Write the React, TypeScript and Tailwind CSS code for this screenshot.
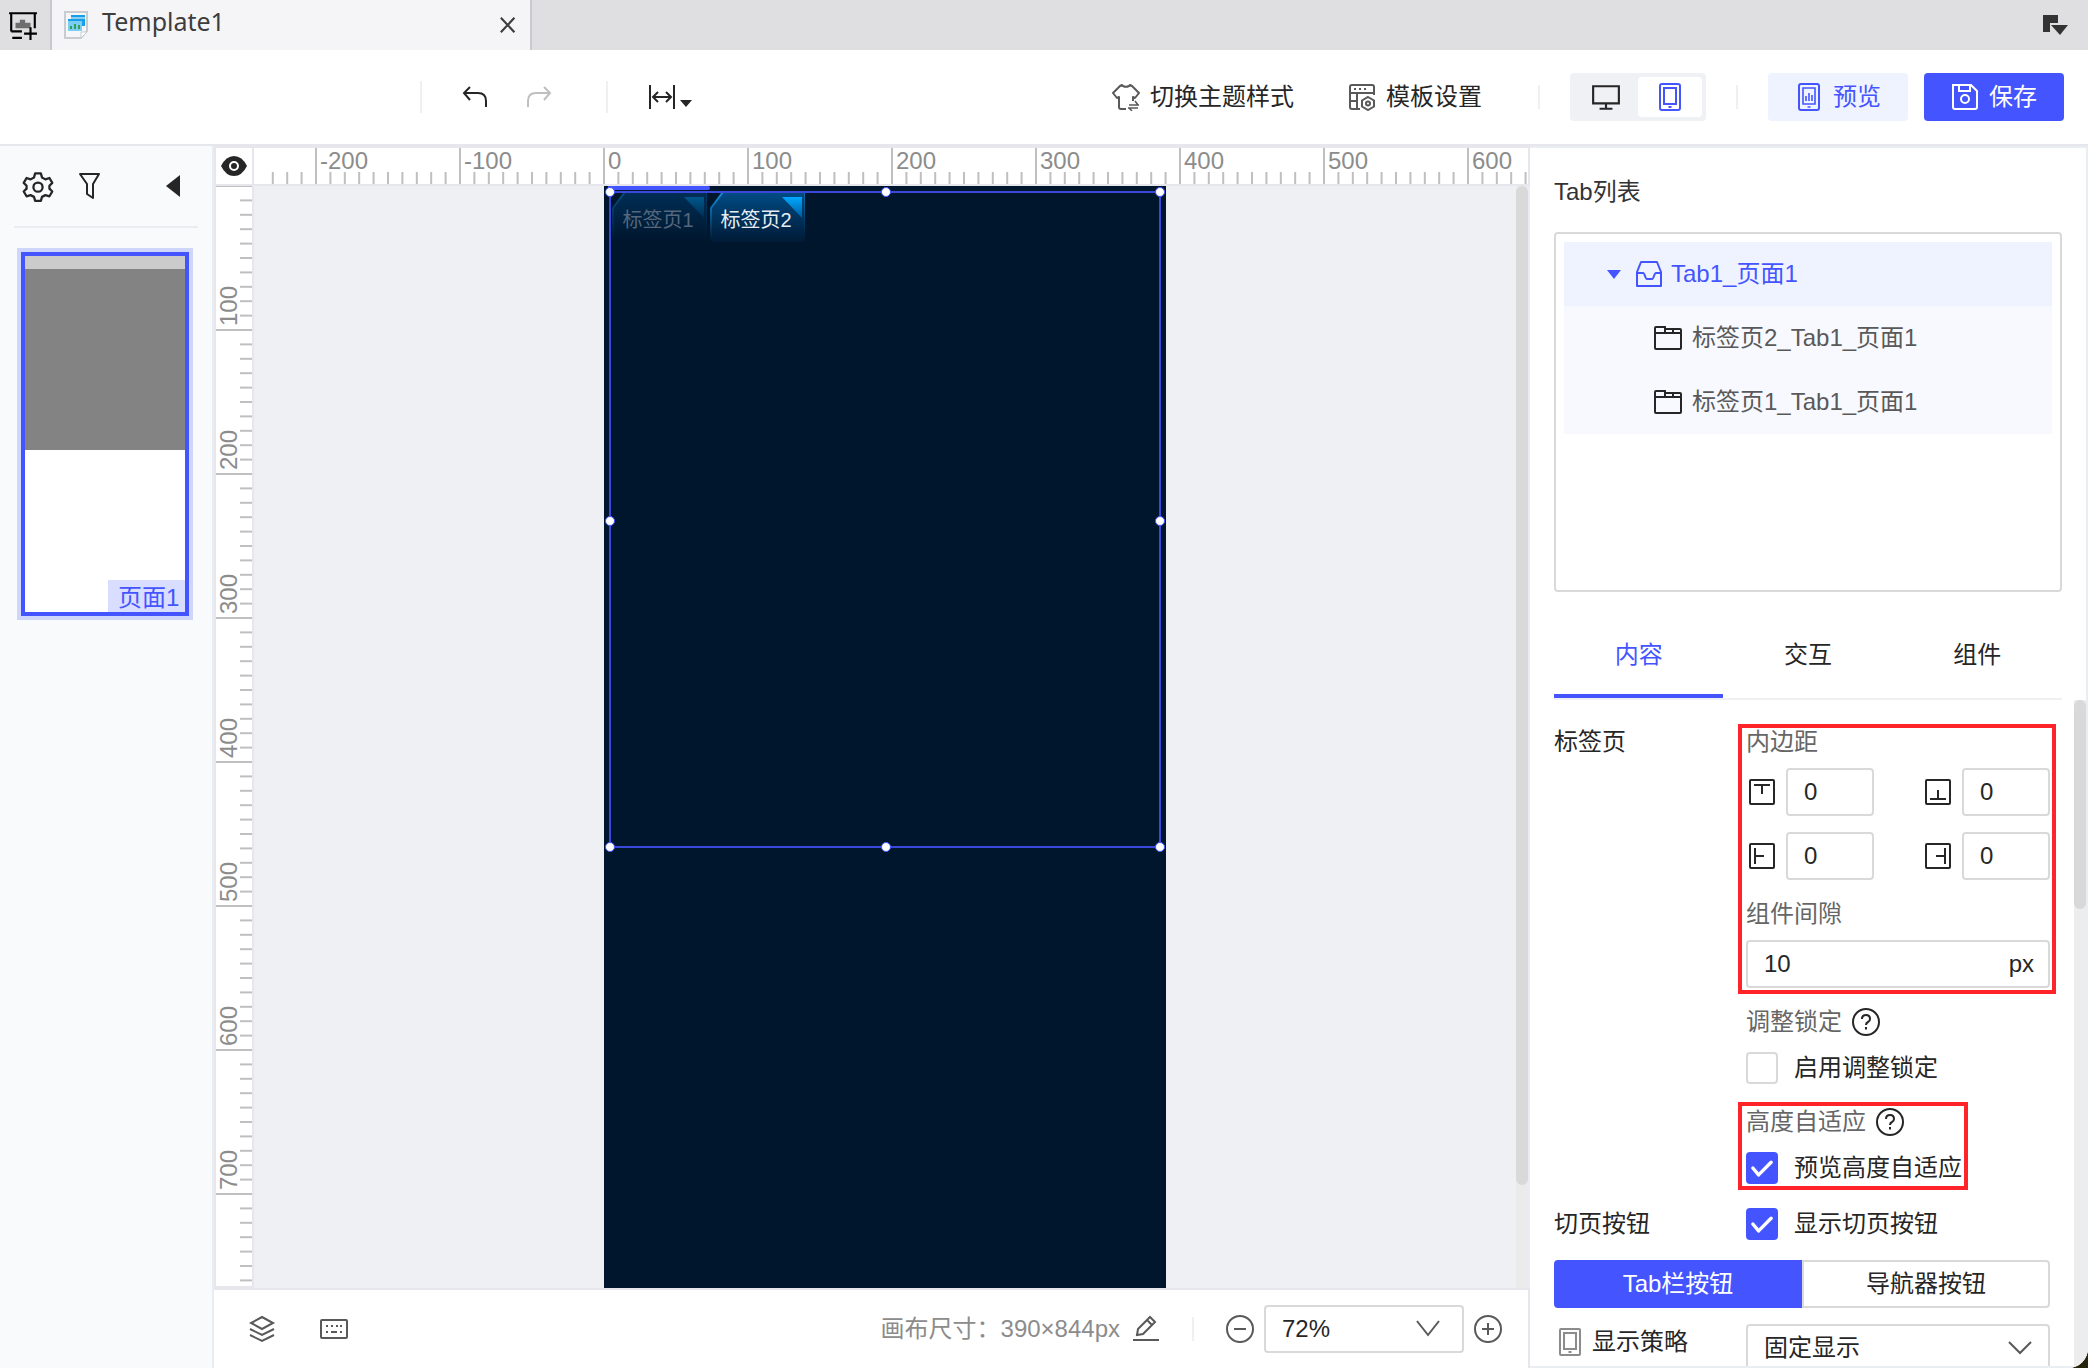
import { useState } from "react";
import type { ReactNode } from "react";
import clsx from "clsx";

const SCALE = 1.44;

const treeItems = ["标签页2_Tab1_页面1", "标签页1_Tab1_页面1"];
const panelTabs = ["内容", "交互", "组件"];

type IconProps = {
  className?: string;
  size?: number;
  width?: number;
  children: ReactNode;
};

function Icon({ className, size = 28, width = 2, children }: IconProps) {
  return (
    <svg
      width={size}
      height={size}
      viewBox="0 0 28 28"
      fill="none"
      stroke="currentColor"
      strokeWidth={width}
      className={clsx("shrink-0", className)}
      aria-hidden="true"
    >
      {children}
    </svg>
  );
}

function Divider({ className }: { className?: string }) {
  return <div className={clsx("w-0.5 shrink-0 bg-[#f0f0f2]", className)} />;
}

function TabStrip() {
  return (
    <div className="flex h-[50px] shrink-0 bg-[#dfdfe1] text-[#3d3d3d]">
      <button aria-label="新建模板" className="flex w-[52px] items-center justify-center border-r-2 border-[#c9c9ce] pr-1">
        <Icon className="text-black" size={30}>
          <path d="M3 20V3h22v14M1 3h26M3 20h10" />
          <path d="M7 17V12h4V9h5v3h5v5z" fill="#6e6e6e" stroke="none" />
          <path d="M4 26h9M15 22h12M21 16v12" />
        </Icon>
      </button>
      <div className="flex w-[480px] items-center border-r-2 border-[#c9c9ce] bg-[#f5f5f8] pr-3 pl-3">
        <svg width="24" height="28" viewBox="0 0 24 28" aria-hidden="true">
          <path d="M1 1h22v19l-6 7H1z" fill="#f4f6f7" stroke="#c9cccf" strokeWidth="2" />
          <path d="M17 27v-6h6z" fill="#fff" stroke="#c9cccf" />
          <path d="M7 4h14v11H7z" fill="#169fe6" />
          <path d="M7 7h14" stroke="#fff" />
          <path d="M4 8h14v12H4z" fill="#7ccdf3" />
          <path d="M4 9h14" stroke="#169fe6" strokeWidth="2" />
          <path d="M7 18v-3M11 18v-5M15 18v-4" stroke="#2ea05a" strokeWidth="2" />
        </svg>
        <span className="ml-3.5 flex-1 pb-2 font-['Noto_Sans',sans-serif] text-[25px] leading-9">Template1</span>
        <button aria-label="关闭">
          <Icon size={20} width={3}>
            <path d="M4 4l19 20M23 4L4 24" />
          </Icon>
        </button>
      </div>
      <button aria-label="窗口列表" className="ml-auto pr-5">
        <svg width="26" height="22" viewBox="0 0 26 22" fill="#333" aria-hidden="true">
          <path d="M1 1h15v8H8v9H1z" />
          <path d="M9 11h17l-8 10z" />
        </svg>
      </button>
    </div>
  );
}

function Toolbar() {
  const [device, setDevice] = useState("mobile");

  return (
    <header className="flex h-24 shrink-0 items-center border-b-2 border-[#e6e6ec] bg-white pr-6 text-2xl leading-9 text-[#262626]">
      <Divider className="ml-[420px] h-8" />
      <button aria-label="撤销" className="ml-[39px]">
        <Icon>
          <path d="M9 4L3 10l6 7M3 10h14q8 0 8 8v6" />
        </Icon>
      </button>
      <button aria-label="重做" className="ml-9 text-[#bfbfbf]">
        <Icon>
          <path d="M19 4l6 6-6 7M25 10H11q-8 0-8 8v6" />
        </Icon>
      </button>
      <Divider className="ml-[53px] h-8" />
      <button aria-label="适应宽度" className="ml-10 flex items-center gap-1">
        <Icon>
          <path d="M2 2v24M26 2v24M6 14h16M10 9l-5 5 5 5M18 9l5 5-5 5" />
        </Icon>
        <svg width="12" height="8" viewBox="0 0 12 8" className="mt-3" aria-hidden="true">
          <path d="M0 1h12L6 8z" fill="currentColor" />
        </svg>
      </button>

      <button className="ml-auto flex items-center gap-2.5">
        <Icon className="text-[#595959]">
          <path d="M14 26H9q-2 0-2-2V14l-2 1-4-5 7-7 2-1 1 1q3 1.500 6 0l1-1 2 1 7 7-4 5-2-1v4" strokeLinejoin="round" />
          <path d="M17 22h10M23 18l3 4M26 25H16M20 28l-3-3" strokeWidth="1.500" />
        </Icon>
        切换主题样式
      </button>
      <button className="ml-[54px] flex items-center gap-2.5">
        <Icon className="text-[#595959]">
          <path d="M12 26H4q-2 0-2-2V4q0-2 2-2h20q2 0 2 2v8M2 10h24M9 10v16M2 18h8" />
          <path d="M6 6h2M11 6h2M16 6h2" />
          <path d="M20 14l6 3.500v6L20 27l-6-3.500v-6z" />
          <circle cx="20" cy="20.500" r="2" />
        </Icon>
        模板设置
      </button>
      <Divider className="ml-14 h-6" />
      <div className="ml-[30px] flex h-12 w-[136px] shrink-0 rounded bg-[#f0f1f5] p-1">
        <button
          aria-label="桌面端"
          onClick={() => setDevice("desktop")}
          className={clsx("flex flex-1 items-center justify-center rounded", device === "desktop" ? "bg-white text-[#4455ff]" : "text-[#262626]")}
        >
          <Icon size={30}>
            <path d="M2 4h24v16H2zM14 20v5M8 25h12" />
          </Icon>
        </button>
        <button
          aria-label="移动端"
          onClick={() => setDevice("mobile")}
          className={clsx("flex flex-1 items-center justify-center rounded", device === "mobile" ? "bg-white text-[#4455ff]" : "text-[#262626]")}
        >
          <Icon>
            <rect x="4" y="1" width="20" height="26" rx="2" />
            <path d="M8 5h12v16H8zM12.500 24h3" />
          </Icon>
        </button>
      </div>
      <Divider className="ml-[30px] h-6" />
      <button className="ml-[30px] flex h-12 w-[140px] shrink-0 items-center justify-center gap-2.5 rounded bg-[#eff3ff] text-[#4455ff]">
        <Icon>
          <rect x="4" y="1" width="20" height="26" rx="2" />
          <path d="M8 5h12v16H8zM12.500 24h3M11 18v-5M14 18v-8M17 18v-6" strokeWidth="1.600" />
        </Icon>
        预览
      </button>
      <button className="ml-4 flex h-12 w-[140px] shrink-0 items-center justify-center gap-2.5 rounded bg-[#4455ff] text-white">
        <Icon>
          <path d="M2 2h18l6 6v16q0 2-2 2H4q-2 0-2-2zM8 2v6h11V2" />
          <circle cx="14" cy="16" r="4" />
        </Icon>
        保存
      </button>
    </header>
  );
}

function PageSidebar() {
  return (
    <aside className="w-[214px] shrink-0 border-r-2 border-[#e9edf3] bg-[#f8fafc]">
      <div className="mx-3.5 flex h-[82px] items-center border-b-2 border-[#ebedf0] px-2 pb-1 text-[#262626]">
        <button aria-label="设置" className="pt-1">
          <Icon size={32}>
            <path d="M11.500 3h5l1 3.500 3 1.700 3.500-1.200 2.500 4.300-2.500 2.500v2.500l2.500 2.500-2.500 4.200-3.500-1-3 1.500-1 3.500h-5l-1-3.500-3-1.500-3.500 1-2.500-4.200L4 16.300v-2.500l-2.500-2.500L4 7l3.500 1.200 3-1.700z" strokeLinejoin="round" />
            <circle cx="14" cy="15" r="4" />
          </Icon>
        </button>
        <button aria-label="筛选" className="ml-[22px] pt-1">
          <Icon>
            <path d="M4 2h19l-6 10v14l-6-4V12z" strokeLinejoin="round" />
          </Icon>
        </button>
        <button aria-label="收起" className="ml-auto pt-1 pr-2.5">
          <svg width="14" height="24" viewBox="0 0 14 24" fill="currentColor" aria-hidden="true">
            <path d="M14 1v22L0 12z" />
          </svg>
        </button>
      </div>
      <button className="mx-[17px] mt-5 block border-4 border-[#cfd6fb] text-left">
        <div className="flex h-[364px] w-[168px] flex-col border-4 border-[#4455ff] bg-white">
          <div className="h-[13px] bg-[#cbcbcb]" />
          <div className="h-[181px] bg-[#838383]" />
          <div className="mt-auto ml-auto h-8 w-[77px] bg-[#d9ddff] pl-2.5 text-2xl leading-9 text-[#4455ff]">页面1</div>
        </div>
      </button>
    </aside>
  );
}

function HorizontalRuler() {
  const ticks = Array.from({ length: 93 }, (_, i) => (i - 23) * 10);
  return (
    <svg className="h-9 min-w-0 flex-1 bg-white" aria-hidden="true">
      {ticks.map((t) => {
        const x = 350 + t * SCALE;
        const major = t % 100 === 0;
        return (
          <g key={t}>
            <line x1={x} x2={x} y1={major ? 0 : 24} y2="36" stroke="#bfbfbf" strokeWidth="2" />
            {major && (
              <text x={x + 4} y="21" fontSize="24" fill="#8c8c8c">
                {t}
              </text>
            )}
          </g>
        );
      })}
    </svg>
  );
}

function VerticalRuler() {
  const ticks = Array.from({ length: 85 }, (_, i) => i * 10);
  return (
    <svg className="h-full w-9 bg-white" aria-hidden="true">
      {ticks.map((t) => {
        const y = t * SCALE;
        const major = t % 100 === 0;
        return (
          <g key={t}>
            <line x1={major ? 0 : 24} x2="36" y1={y} y2={y} stroke="#bfbfbf" strokeWidth="2" />
            {major && t > 0 && (
              <text transform={`translate(21 ${y - 4}) rotate(-90)`} fontSize="24" fill="#8c8c8c">
                {t}
              </text>
            )}
          </g>
        );
      })}
    </svg>
  );
}

function PageTab({ label, active, onClick }: { label: string; active: boolean; onClick: () => void }) {
  const id = active ? "tab-on" : "tab-off";
  return (
    <button onClick={onClick} className={clsx("relative h-[50px] w-24 pr-1 text-xl leading-[56px]", active ? "text-[#e8edf2]" : "text-[#56677c]")}>
      <svg className="absolute inset-0" width="96" height="50" viewBox="0 0 96 50" aria-hidden="true">
        <defs>
          <linearGradient id={id} x1="0" y1="0" x2="0" y2="1">
            <stop offset="0" stopColor={active ? "#004c86" : "#002e56"} />
            <stop offset="1" stopColor={active ? "#001a36" : "#00162d"} />
          </linearGradient>
          <linearGradient id={`${id}-corner`} x1="0" y1="0" x2="0" y2="1">
            <stop offset="0" stopColor={active ? "#00a8ff" : "#00588c"} />
            <stop offset="1" stopColor={active ? "#00599b" : "#002b50"} />
          </linearGradient>
          <linearGradient id={`${id}-edge`} x1="0" y1="0" x2="0" y2="50" gradientUnits="userSpaceOnUse">
            <stop offset="0" stopColor={active ? "#1290e0" : "#064d80"} />
            <stop offset="1" stopColor="#00162d" />
          </linearGradient>
        </defs>
        <path d="M1 50V16L13 0h82v50z" fill={`url(#${id})`} />
        <path d="M1 50V16L13 0" fill="none" stroke={`url(#${id}-edge)`} strokeWidth="2" />
        <path d="M94 0h1v50h-1z" fill={`url(#${id}-edge)`} opacity="0.5" />
        <path d="M72 5h20v21z" fill={`url(#${id}-corner)`} />
      </svg>
      <span className="relative">{label}</span>
    </button>
  );
}

function Selection() {
  const handles = [
    "-left-1.5 -top-1.5",
    "left-1/2 -ml-1 -top-1.5",
    "-right-1.5 -top-1.5",
    "-left-1.5 top-1/2 -mt-1",
    "-right-1.5 top-1/2 -mt-1",
    "-left-1.5 -bottom-1.5",
    "left-1/2 -ml-1 -bottom-1.5",
    "-right-1.5 -bottom-1.5",
  ];
  return (
    <div className="pointer-events-none absolute top-[5px] left-[5px] h-[657px] w-[552px] border-2 border-[#3a49dc]">
      {handles.map((h) => (
        <span key={h} className={clsx("absolute h-2.5 w-2.5 rounded-full border border-[#4455ff] bg-white", h)} />
      ))}
    </div>
  );
}

function Workspace() {
  const [tab, setTab] = useState(1);

  return (
    <main className="flex min-w-0 flex-1 flex-col">
      <div className="flex h-10 shrink-0 border-y-2 border-[#e6e6ec]">
        <button aria-label="显示标尺" className="flex w-10 shrink-0 items-center justify-center border-x-2 border-[#e6e6ec] bg-white text-[#262626]">
          <svg width="26" height="20" viewBox="0 0 26 20" aria-hidden="true">
            <path d="M0 10Q5 0 13 0t13 10q-5 10-13 10T0 10z" fill="currentColor" />
            <circle cx="13" cy="10" r="4" fill="none" stroke="#fff" strokeWidth="2" />
          </svg>
        </button>
        <HorizontalRuler />
        <div className="w-0.5 bg-[#e6e6ec]" />
      </div>
      <div className="flex min-h-0 flex-1">
        <div className="w-10 shrink-0 border-x-2 border-b-2 border-[#e6e6ec]">
          <VerticalRuler />
        </div>
        <div className="min-w-0 flex-1 overflow-hidden bg-[#eff0f4]">
          <div className="relative ml-[350px] h-full w-[562px] bg-[#00162d] px-2 pt-1.5">
            <div className="absolute top-0 left-1 h-1 w-[102px] rounded-r-sm bg-[#4455ff]" />
            <div className="flex gap-0.5">
              <PageTab label="标签页1" active={tab === 0} onClick={() => setTab(0)} />
              <PageTab label="标签页2" active={tab === 1} onClick={() => setTab(1)} />
            </div>
            <Selection />
          </div>
        </div>
        <div className="w-3 shrink-0 bg-[#ebebeb]">
          <div className="h-[999px] max-h-full rounded-full bg-[#d9d9d9]" />
        </div>
        <div className="w-0.5 shrink-0 bg-[#e9edf3]" />
      </div>
      <footer className="flex h-20 shrink-0 items-center border-t-2 border-r-2 border-[#e6e6ec] bg-white pr-[26px] pl-[34px] text-2xl leading-9 text-[#595959]">
        <button aria-label="图层">
          <Icon>
            <path d="M14 2l11 6-11 6L3 8zM2 14l12 6 12-6M2 20l12 6 12-6" />
          </Icon>
        </button>
        <button aria-label="键盘" className="ml-11">
          <Icon>
            <rect x="1" y="5" width="26" height="18" rx="1" />
            <path d="M6 11h2M11 11h2M16 11h2M20 11h2M6 17h2M11 17h6M20 17h2" />
          </Icon>
        </button>
        <span className="ml-auto text-[#8c8c8c]">画布尺寸：390×844px</span>
        <button aria-label="编辑画布尺寸" className="ml-3">
          <Icon>
            <path d="M1 25h26M5 20l1-6L18 2l5 5-12 12zM15 5l5 5" />
          </Icon>
        </button>
        <Divider className="ml-8 h-6" />
        <button aria-label="缩小" className="ml-8">
          <Icon>
            <circle cx="14" cy="14" r="13" />
            <path d="M8 14h12" />
          </Icon>
        </button>
        <div className="relative ml-2.5">
          <select aria-label="缩放比例" className="h-12 w-[200px] appearance-none rounded border-2 border-[#d9d9d9] bg-white pl-4 text-[#262626]">
            <option>72%</option>
            <option>100%</option>
          </select>
          <Icon className="pointer-events-none absolute top-2.5 right-[22px]">
            <path d="M3 6l11 14L25 6" />
          </Icon>
        </div>
        <button aria-label="放大" className="ml-2.5">
          <Icon>
            <circle cx="14" cy="14" r="13" />
            <path d="M8 14h12M14 8v12" />
          </Icon>
        </button>
      </footer>
    </main>
  );
}

function TabTree() {
  return (
    <div className="h-[360px] shrink-0 rounded border-2 border-[#d9d9d9] p-2">
      <button className="flex h-16 w-full items-center bg-[#eff3ff] pl-[43px] text-[#4455ff]">
        <svg width="14" height="9" viewBox="0 0 14 9" fill="currentColor" aria-hidden="true">
          <path d="M0 0h14L7 9z" />
        </svg>
        <Icon className="ml-3.5">
          <path d="M2 12l4-10h16l4 10v14H2zM2 13h6q1 0 2 3 1 3 2 3h5q1 0 2-3t2-3h5" strokeLinejoin="round" />
        </Icon>
        <span className="ml-2">Tab1_页面1</span>
      </button>
      {treeItems.map((item) => (
        <button key={item} className="flex h-16 w-full items-center bg-[#f8f9ff] pl-[90px] text-[#595959]">
          <Icon className="text-[#262626]">
            <path d="M1 4q0-1 1-1h9v6H1M11 5h15q1 0 1 1v3H11M1 4v20q0 1 1 1h24q1 0 1-1V9M19 5v4" />
          </Icon>
          <span className="ml-2.5">{item}</span>
        </button>
      ))}
    </div>
  );
}

const paddings = [
  { id: "top", label: "上边距", path: "M6 7h16M14 7v9" },
  { id: "bottom", label: "下边距", path: "M6 21h16M14 21v-9" },
  { id: "left", label: "左边距", path: "M7 6v16M7 14h9" },
  { id: "right", label: "右边距", path: "M21 6v16M21 14h-9" },
];

function PaddingInput({ id, label, path }: { id: string; label: string; path: string }) {
  return (
    <label className="flex items-center justify-between pl-0.5">
      <span className="sr-only">{label}</span>
      <Icon className="text-[#262626]">
        <rect x="2" y="2" width="24" height="24" rx="1" />
        <path d={path} />
      </Icon>
      <input id={id} defaultValue="0" className="h-12 w-[88px] rounded border-2 border-[#d9d9d9] pl-4 text-[#262626]" />
    </label>
  );
}

function HelpButton() {
  return (
    <button aria-label="帮助" className="text-[#262626]">
      <Icon>
        <circle cx="14" cy="14" r="13" />
        <path d="M10 11q0-4 4-4t4 4q0 2-2 3-2 1-2 3M14 19v2.500" />
      </Icon>
    </button>
  );
}

function CheckRow({ label, defaultChecked }: { label: string; defaultChecked?: boolean }) {
  return (
    <label className="flex h-8 items-center gap-4 whitespace-nowrap text-[#262626]">
      <span className="grid shrink-0">
        <input
          type="checkbox"
          defaultChecked={defaultChecked}
          className="peer col-start-1 row-start-1 h-8 w-8 appearance-none rounded border-2 border-[#d9d9d9] bg-white checked:border-[#4455ff] checked:bg-[#4455ff]"
        />
        <Icon size={32} width={3} className="pointer-events-none invisible col-start-1 row-start-1 text-white peer-checked:visible">
          <path d="M6 14l5 6L22 9" strokeLinecap="round" strokeLinejoin="round" />
        </Icon>
      </span>
      {label}
    </label>
  );
}

function Highlight({ className }: { className: string }) {
  return <div className={clsx("pointer-events-none absolute -left-2 border-4 border-[#ff2429]", className)} />;
}

function Inspector() {
  const [active, setActive] = useState(0);

  return (
    <aside className="flex w-[558px] shrink-0 flex-col border-y-2 border-r-2 border-[#e9eef3] bg-white text-2xl leading-9 text-[#333]">
      <div className="shrink-0 pr-6 pl-6">
        <h2 className="pt-[26px] pb-[22px]">Tab列表</h2>
        <TabTree />
        <div className="mt-6 grid h-[84px] grid-cols-3 border-b-2 border-[#f0f0f2]">
          {panelTabs.map((name, i) => (
            <button
              key={name}
              onClick={() => setActive(i)}
              className={clsx("border-b-4", active === i ? "border-[#4455ff] text-[#4455ff]" : "border-transparent text-[#262626]")}
            >
              {name}
            </button>
          ))}
        </div>
      </div>

      <div className="flex min-h-0 flex-1 overflow-hidden">
        <div className="min-w-0 flex-1 pr-6 pl-6">
          <div className="grid grid-cols-[192px_1fr] pt-6">
            <div className="text-[#262626]">标签页</div>
            <div className="text-[#666]">
              <div className="relative">
                <Highlight className="top-0 -right-1.5 -bottom-1.5" />
                <div>内边距</div>
                <div className="mt-2 grid grid-cols-2 gap-x-12 gap-y-4">
                  {paddings.map((p) => (
                    <PaddingInput key={p.id} {...p} />
                  ))}
                </div>
                <label htmlFor="gap" className="mt-4 block">
                  组件间隙
                </label>
                <div className="mt-2 flex h-12 items-center rounded border-2 border-[#d9d9d9] pr-3.5 pl-4 text-[#262626]">
                  <input id="gap" defaultValue="10" className="w-0 flex-1 outline-none" />
                  <span>px</span>
                </div>
              </div>
              <div className="mt-4 flex items-center gap-2.5">
                调整锁定
                <HelpButton />
              </div>
              <div className="mt-3">
                <CheckRow label="启用调整锁定" />
              </div>
              <div className="relative mt-[18px]">
                <Highlight className="top-0 -bottom-1.5 w-[230px]" />
                <div className="flex items-center gap-2.5 pt-0.5">
                  高度自适应
                  <HelpButton />
                </div>
                <div className="mt-3">
                  <CheckRow label="预览高度自适应" defaultChecked />
                </div>
              </div>
            </div>
          </div>
          <div className="mt-[22px] grid grid-cols-[192px_1fr] items-center">
            <div className="text-[#262626]">切页按钮</div>
            <CheckRow label="显示切页按钮" defaultChecked />
          </div>
          <div className="mt-[18px] grid h-12 grid-cols-2">
            <button className="rounded-l bg-[#4455ff] text-white">Tab栏按钮</button>
            <button className="rounded-r border-2 border-[#d9d9d9] text-[#262626]">导航器按钮</button>
          </div>
          <div className="mt-4 grid grid-cols-[192px_1fr]">
            <label htmlFor="strategy" className="flex h-9 items-center gap-2 self-start pl-0.5 text-[#262626]">
              <Icon className="text-[#8c8c8c]">
                <rect x="4" y="1" width="20" height="26" rx="1" />
                <path d="M8 5h12v16H8zM12.500 24h3" />
              </Icon>
              显示策略
            </label>
            <div className="relative">
              <select id="strategy" className="h-12 w-full appearance-none rounded border-2 border-[#d9d9d9] bg-white pl-4 text-[#262626]">
                <option>固定显示</option>
              </select>
              <Icon className="pointer-events-none absolute top-2.5 right-4 text-[#595959]">
                <path d="M3 8l11 11L25 8" />
              </Icon>
            </div>
          </div>
        </div>
        <div className="w-3 shrink-0 bg-[#ededed]">
          <div className="h-[209px] rounded-full bg-[#d9d9d9]" />
        </div>
      </div>
    </aside>
  );
}

export default function App() {
  return (
    <div className="h-screen bg-[#26240a]">
      <div className="flex h-full flex-col overflow-hidden rounded-br-[20px] bg-white font-['Liberation_Sans','Noto_Sans_CJK_SC',sans-serif]">
        <TabStrip />
        <Toolbar />
        <div className="flex min-h-0 flex-1">
          <PageSidebar />
          <Workspace />
          <Inspector />
        </div>
      </div>
    </div>
  );
}
